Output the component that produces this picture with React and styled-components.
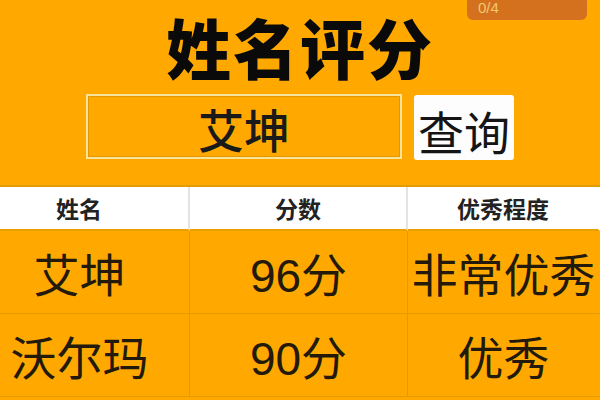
import React from 'react';
import styled, { createGlobalStyle } from 'styled-components';

const GlobalStyle = createGlobalStyle`
  html, body {
    margin: 0;
    padding: 0;
    width: 600px;
    height: 400px;
    overflow: hidden;
    background: #ffa900;
  }
  body {
    font-family: "Liberation Sans", "Noto Sans CJK SC", sans-serif;
  }
`;

const Page = styled.div`
  position: relative;
  width: 600px;
  height: 400px;
  display: flex;
  flex-direction: column;
  align-items: center;
  overflow: hidden;
`;

// counter badge peeking in at the top right
const Badge = styled.div`
  position: absolute;
  top: -10px;
  right: 13px;
  width: 120px;
  height: 30px;
  box-sizing: border-box;
  padding: 11px 0 0 11px;
  background: #d4711f;
  border-radius: 6px;
  color: #f3c76e;
  font-size: 15px;
  line-height: 14px;
`;

const Title = styled.h1`
  margin: 8px 0 0;
  font-family: "Noto Sans CJK SC", sans-serif;
  font-size: 65px;
  font-weight: 900;
  line-height: 77px;
  color: #0a0a0a;
  letter-spacing: 2px;
`;

const SearchRow = styled.div`
  display: flex;
  gap: 12px;
  margin-top: 9px;
`;

const NameInput = styled.div`
  width: 316px;
  height: 65px;
  box-sizing: border-box;
  border: 2px solid #f7e39a;
  box-shadow: inset 0 0 0 1px rgba(190, 130, 0, 0.45);
  display: flex;
  align-items: center;
  justify-content: center;
  font-family: "Noto Sans CJK SC", sans-serif;
  font-size: 46px;
  font-weight: 500;
  color: #1a1a1a;
  padding-top: 2px;
`;

const SearchButton = styled.button`
  width: 100px;
  height: 65px;
  margin-top: 1px;
  border: none;
  border-radius: 3px;
  background: #fdfdfd;
  padding: 2px 0 0;
  font-family: "Noto Sans CJK SC", sans-serif;
  font-size: 46px;
  color: #151515;
`;

const Table = styled.div`
  margin-top: 25px;
  align-self: flex-start;
  margin-left: -30px;
  display: grid;
  grid-template-columns: 220px 218px 192px;
  border-top: 2px solid #e39b00;
`;

const HeadCell = styled.div`
  height: 42px;
  background: #ffffff;
  border-right: 2px solid ${p => (p.last ? 'transparent' : '#e4e4e4')};
  border-bottom: 2px solid #e8a000;
  display: flex;
  align-items: center;
  justify-content: center;
  font-family: "Noto Sans CJK SC", sans-serif;
  font-weight: 700;
  font-size: 23px;
  color: #222;
`;

const Cell = styled.div`
  height: 83px;
  box-sizing: border-box;
  border-right: 1px solid ${p => (p.last ? 'transparent' : '#e39b00')};
  border-bottom: 1px solid #e39b00;
  display: flex;
  align-items: center;
  justify-content: center;
  white-space: nowrap;
  font-family: "Liberation Sans", "Noto Sans CJK SC", sans-serif;
  font-size: 46px;
  color: #241a0c;
`;

const rows = [
  { name: '艾坤', score: '96分', level: '非常优秀' },
  { name: '沃尔玛', score: '90分', level: '优秀' },
];

export default function App() {
  return (
    <Page>
      <GlobalStyle />
      <Badge>0/4</Badge>
      <Title>姓名评分</Title>
      <SearchRow>
        <NameInput>艾坤</NameInput>
        <SearchButton>查询</SearchButton>
      </SearchRow>
      <Table>
        <HeadCell>姓名</HeadCell>
        <HeadCell>分数</HeadCell>
        <HeadCell last>优秀程度</HeadCell>
        {rows.map(r => (
          <React.Fragment key={r.name}>
            <Cell>{r.name}</Cell>
            <Cell>{r.score}</Cell>
            <Cell last>{r.level}</Cell>
          </React.Fragment>
        ))}
      </Table>
    </Page>
  );
}
